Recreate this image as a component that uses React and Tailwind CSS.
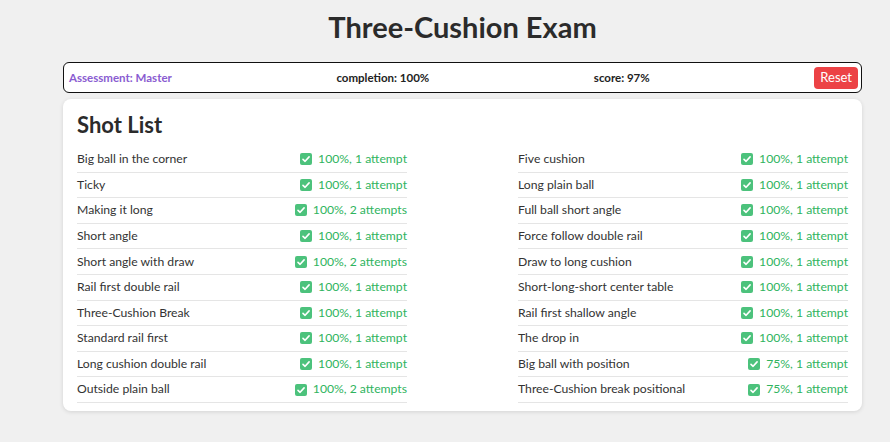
import React from "react";

const left = [
  ["Big ball in the corner", "100%, 1 attempt"],
  ["Ticky", "100%, 1 attempt"],
  ["Making it long", "100%, 2 attempts"],
  ["Short angle", "100%, 1 attempt"],
  ["Short angle with draw", "100%, 2 attempts"],
  ["Rail first double rail", "100%, 1 attempt"],
  ["Three-Cushion Break", "100%, 1 attempt"],
  ["Standard rail first", "100%, 1 attempt"],
  ["Long cushion double rail", "100%, 1 attempt"],
  ["Outside plain ball", "100%, 2 attempts"],
];

const right = [
  ["Five cushion", "100%, 1 attempt"],
  ["Long plain ball", "100%, 1 attempt"],
  ["Full ball short angle", "100%, 1 attempt"],
  ["Force follow double rail", "100%, 1 attempt"],
  ["Draw to long cushion", "100%, 1 attempt"],
  ["Short-long-short center table", "100%, 1 attempt"],
  ["Rail first shallow angle", "100%, 1 attempt"],
  ["The drop in", "100%, 1 attempt"],
  ["Big ball with position", "75%, 1 attempt"],
  ["Three-Cushion break positional", "75%, 1 attempt"],
];

function Check() {
  return (
    <svg width="12" height="12" viewBox="0 0 12 12" className="shrink-0">
      <rect x="0" y="0" width="12" height="12" rx="2" fill="#4cc27c" />
      <path d="M3 6.3 L5.1 8.3 L9.1 3.9" stroke="#fff" strokeWidth="1.6" fill="none" strokeLinecap="round" strokeLinejoin="round" />
    </svg>
  );
}

function Row({ name, result }) {
  return (
    <div className="flex items-center justify-between h-[25.6px] border-b border-[#e5e5e5] text-[12.2px]">
      <span className="text-[#333]">{name}</span>
      <span className="flex items-center gap-[6px] text-[#2fb45e]">
        <Check />
        {result}
      </span>
    </div>
  );
}

export default function App() {
  return (
    <div className="min-h-[442px] bg-[#f0f0f0] pt-[9px] font-['Lato',sans-serif]">
      <div className="ml-[63px] w-[799px]">
        <h1 className="text-center text-[29px] font-bold text-[#2b2b2b] leading-[36px]">Three-Cushion Exam</h1>
        <div className="mt-[17px] flex items-center justify-between h-[31px] rounded-[6px] border border-[#111] bg-white pl-[5px] pr-[3px] text-[11.5px] font-bold text-[#222]">
          <span className="text-[#8a5cd1]">Assessment: Master</span>
          <span>completion: 100%</span>
          <span>score: 97%</span>
          <button className="h-[22px] rounded-[4px] bg-[#ec4245] px-[6px] text-[13px] font-normal text-white">Reset</button>
        </div>
        <div className="mt-[6px] rounded-[8px] bg-white px-[14px] pt-[11px] pb-[8px] shadow-[0_1px_4px_rgba(0,0,0,0.12)]">
          <h2 className="text-[22px] font-bold text-[#2b2b2b] leading-[30px]">Shot List</h2>
          <div className="mt-[7px] flex justify-between">
            <div className="w-[330px]">
              {left.map(([n, r]) => (
                <Row key={n} name={n} result={r} />
              ))}
            </div>
            <div className="w-[330px]">
              {right.map(([n, r]) => (
                <Row key={n} name={n} result={r} />
              ))}
            </div>
          </div>
        </div>
      </div>
    </div>
  );
}
